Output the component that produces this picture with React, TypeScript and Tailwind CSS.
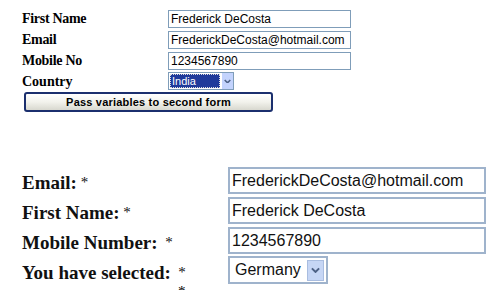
import React from "react";

const serif = "font-['Liberation_Serif','Times_New_Roman',serif]";
const sans = "font-['Liberation_Sans',Arial,sans-serif]";

const Chevron = ({ size = 8 }: { size?: number }) => (
	<svg width={size} height={size * 0.7} viewBox="0 0 10 7">
		<path d="M1 1.5 L5 5.5 L9 1.5" fill="none" stroke="#4d6185" strokeWidth="2.2" />
	</svg>
);

const Star = ({ gap = "" }: { gap?: string }) => (
	<span className="font-normal text-[15px] relative -top-[2px] whitespace-pre">{gap}*</span>
);

const TopRow = ({ label, value }: { label: string; value: string }) => (
	<div className="flex items-center h-[21px]">
		<div className={`${serif} w-[146px] text-[14px] font-bold text-black tracking-[-0.3px]`}>{label}</div>
		<div
			className={`${sans} w-[183px] h-[18px] border border-[#7f9db9] bg-white text-[12px] leading-[16px] pl-[2px] text-black`}>
			{value}
		</div>
	</div>
);

const BottomRow = ({ label, gap, value }: { label: string; gap: string; value: string }) => (
	<div className="flex items-center h-[30px]">
		<div className={`${serif} w-[206px] text-[19px] font-bold text-[#111] pt-[6px]`}>
			{label}
			<Star gap={gap} />
		</div>
		<div
			className={`${sans} w-[258px] h-[27px] border-2 border-[#9fb3cc] bg-white text-[16px] leading-[23px] pl-[2px] text-[#111]`}>
			{value}
		</div>
	</div>
);

export default function App() {
	return (
		<div className="w-[501px] h-[290px] bg-white overflow-hidden pl-[22px] pt-[8px]">
			<div className="flex flex-col">
				<TopRow label="First Name" value="Frederick DeCosta" />
				<TopRow label="Email" value="FrederickDeCosta@hotmail.com" />
				<TopRow label="Mobile No" value="1234567890" />
				<div className="flex items-center h-[20px]">
					<div className={`${serif} w-[146px] text-[14px] text-black font-semibold`}>Country</div>
					<div className="flex w-[66px] h-[18px] border border-[#7f9db9] bg-white">
						<div className="flex-1 m-[1px] bg-[#1f3a9b] outline-1 outline-dotted outline-[#ddd] -outline-offset-1 flex items-center">
							<span className={`${sans} text-[11px] text-white pl-[2px] leading-none`}>India</span>
						</div>
						<div className="w-[12px] bg-[#c3d3fd] border-l border-white flex items-center justify-center">
							<Chevron size={7} />
						</div>
					</div>
				</div>
				<div className="ml-[2px] mt-[1px] w-[249px] h-[20px] rounded-[3px] border-2 border-[#1b2f6e] bg-gradient-to-b from-white via-[#f2f2ec] to-[#d8d8cf] flex items-center justify-center">
					<span className={`${sans} text-[11px] font-bold text-black tracking-[0.2px]`}>
						Pass variables to second form
					</span>
				</div>
			</div>

			<div className="flex flex-col mt-[53px]">
				<BottomRow label="Email:" gap=" " value="FrederickDeCosta@hotmail.com" />
				<BottomRow label="First Name:" gap=" " value="Frederick DeCosta" />
				<BottomRow label="Mobile Number:" gap="  " value="1234567890" />
				<div className="flex items-center h-[30px]">
					<div className={`${serif} w-[206px] text-[19px] font-bold text-[#111] pt-[6px]`}>
						You have selected:
						<Star gap="  " />
					</div>
					<div className="flex items-center w-[100px] h-[28px] border-2 border-[#9fb3cc] bg-white">
						<span className={`${sans} flex-1 text-[16px] text-[#111] pl-[5px]`}>Germany</span>
						<div className="w-[17px] h-[21px] mr-[2px] bg-[#c6d6f5] border border-[#a9bde0] flex items-center justify-center">
							<Chevron size={9} />
						</div>
					</div>
				</div>
				<div className={`${serif} ml-[156px] -mt-[1px] text-[15px] leading-none`}>*</div>
			</div>
		</div>
	);
}
